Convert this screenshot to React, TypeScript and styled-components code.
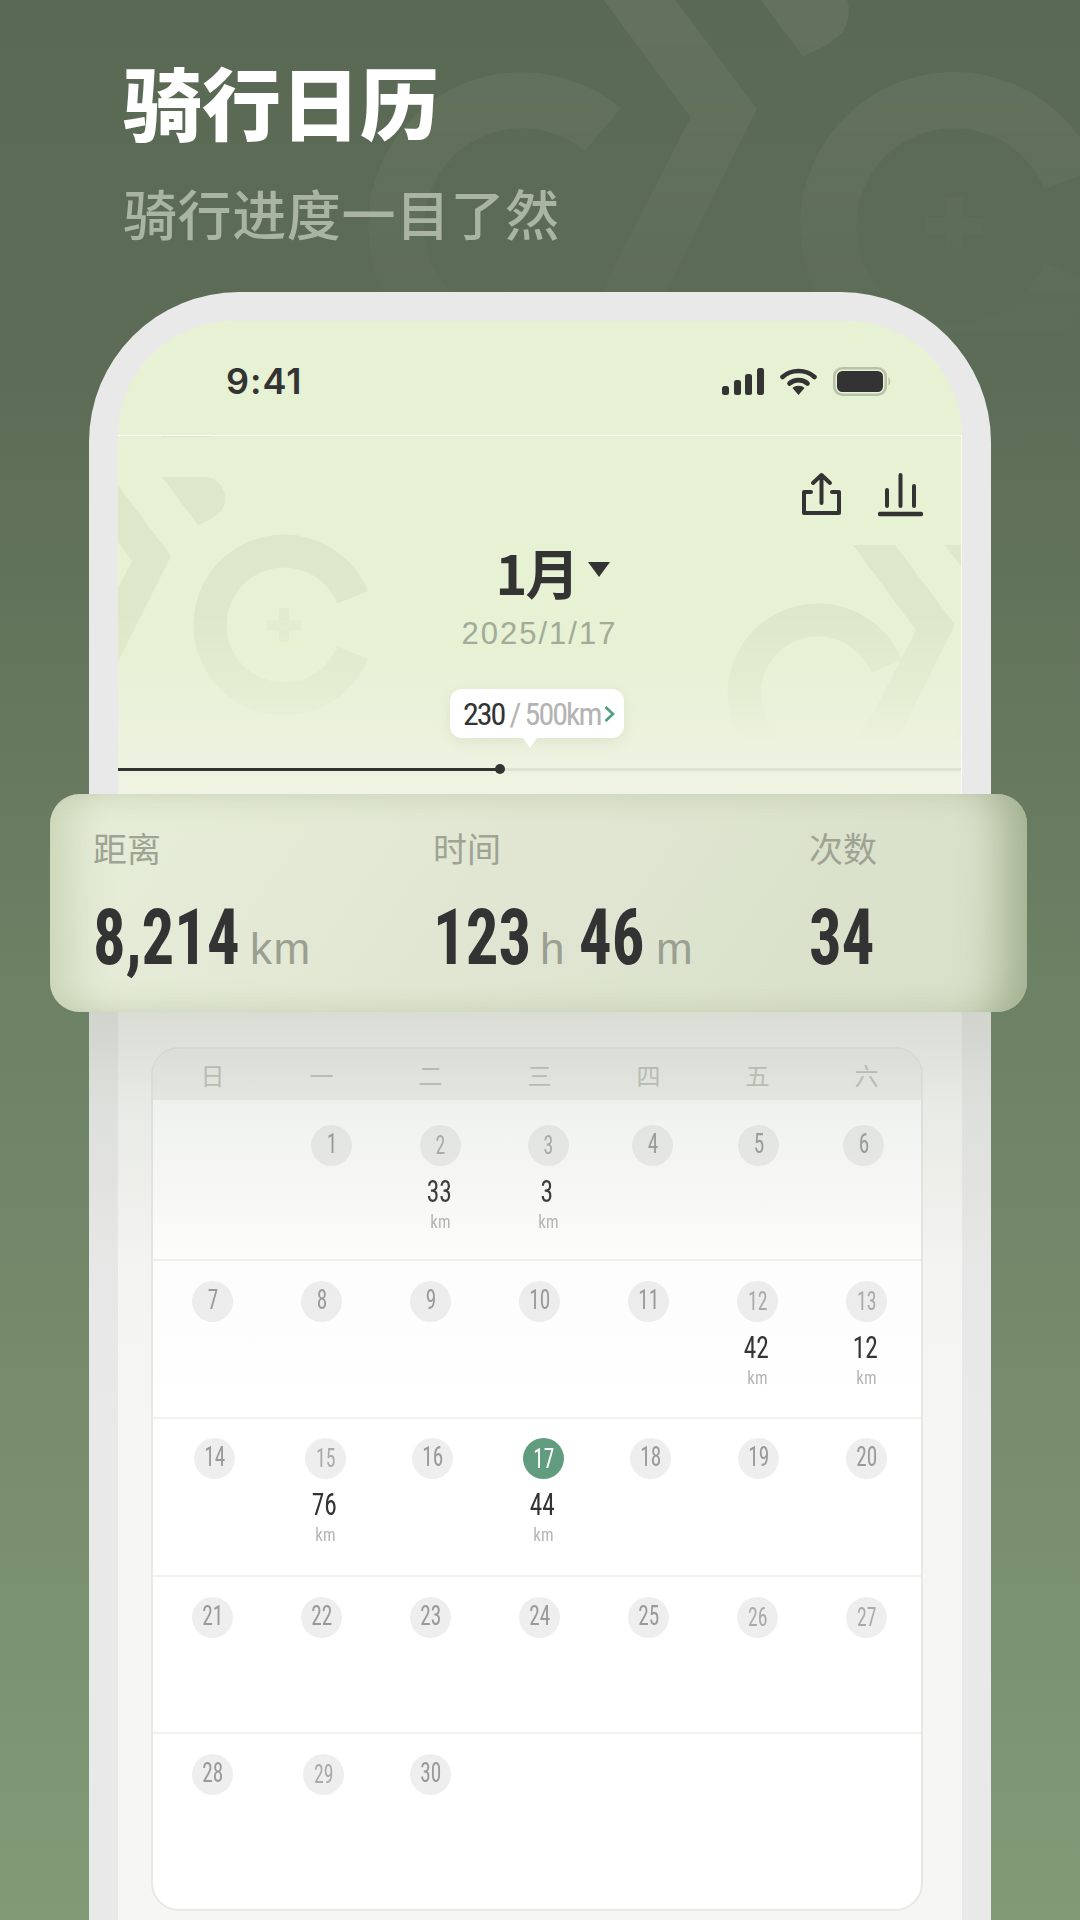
import React from 'react';
import styled, { createGlobalStyle } from 'styled-components';

const NARROW = '"Roboto Condensed", Roboto, sans-serif';
const CJK = '"Noto Sans CJK SC", "Noto Sans", sans-serif';

const GlobalStyle = createGlobalStyle`
  html, body {
    margin: 0;
    padding: 0;
    background: #6c8064;
  }
`;

const Page = styled.div`
  position: relative;
  width: 1080px;
  height: 1920px;
  overflow: hidden;
  background: linear-gradient(180deg, #5a6954 0%, #5d6c56 20%, #6c8064 50%, #829a76 100%);
  font-family: ${CJK};
`;

const Watermark = styled.svg`
  position: absolute;
  left: 0;
  top: 0;
  width: 1080px;
  height: 500px;
  mask-image: linear-gradient(180deg, #000 0%, rgba(0, 0, 0, 0.55) 40%, transparent 72%);
`;

const Intro = styled.div`
  position: relative;
  height: 292px;
  padding: 48px 0 0 123px;
  box-sizing: border-box;
`;

const Title = styled.h1`
  margin: 0;
  font-size: 79px;
  line-height: 106px;
  font-weight: 900;
  color: #ffffff;
`;

const Subtitle = styled.h2`
  margin: 21px 0 0;
  font-size: 54px;
  line-height: 76px;
  font-weight: 500;
  letter-spacing: 0.6px;
  color: #a9b4a3;
`;

const Phone = styled.div`
  position: relative;
  width: 902px;
  height: 1700px;
  margin-left: 89px;
  padding: 29px 29px 0;
  box-sizing: border-box;
  background: #e9e9e9;
  border-radius: 150px 150px 0 0;
`;

const Screen = styled.div`
  height: 100%;
  background: #f6f6f4;
  border-radius: 118px 118px 0 0;
`;

const StatusBar = styled.div`
  display: flex;
  align-items: center;
  justify-content: space-between;
  height: 114px;
  padding: 6px 70px 0 108px;
  box-sizing: border-box;
  background: #e7f1d4;
  border-radius: 118px 118px 0 0;
`;

const Clock = styled.span`
  font-family: Inter, sans-serif;
  font-size: 36px;
  font-weight: 600;
  letter-spacing: 1px;
  color: #333333;
`;

const StatusIcons = styled.div`
  display: flex;
  align-items: center;
  gap: 16px;
`;

const Header = styled.div`
  position: relative;
  height: 359px;
  background: linear-gradient(180deg, #e7f1d4 0%, #e7f1d4 58%, #eff3e3 100%);
  border-top: 1px solid rgba(255, 255, 255, 0.8);
  border-right: 1px solid rgba(255, 255, 255, 0.6);
  box-sizing: border-box;
  &::before {
    content: '';
    position: absolute;
    left: 44px;
    top: 0;
    width: 50px;
    height: 1px;
    background: #dde5cc;
  }
`;

const HeaderArt = styled.svg`
  position: absolute;
  left: 0;
  top: 0;
  width: 843px;
  height: 358px;
  mask-image: linear-gradient(180deg, #000 50%, transparent 85%);
`;

const Tools = styled.div`
  position: relative;
  display: flex;
  justify-content: flex-end;
  align-items: flex-start;
  gap: 37px;
  padding: 36px 38px 0 0;
  height: 81px;
`;

const MonthRow = styled.div`
  position: relative;
  display: flex;
  align-items: center;
  justify-content: center;
  gap: 11px;
  height: 70px;
  margin-top: -16px;
  padding-left: 27px;
  font-size: 54px;
  line-height: 70px;
  font-weight: 700;
  letter-spacing: -2px;
  color: #333333;
`;

const Caret = styled.i`
  width: 0;
  height: 0;
  margin-top: -6px;
  border-left: 11px solid transparent;
  border-right: 11px solid transparent;
  border-top: 15px solid #333333;
`;

const DateText = styled.div`
  position: relative;
  margin-top: 5px;
  text-align: center;
  font-family: "Liberation Sans", sans-serif;
  font-size: 31px;
  line-height: 44px;
  letter-spacing: 2px;
  color: #a3aa98;
`;

const Bubble = styled.div`
  position: absolute;
  left: 332px;
  top: 253px;
  display: flex;
  align-items: center;
  width: 174px;
  height: 49px;
  padding-left: 13px;
  box-sizing: border-box;
  background: #ffffff;
  border-radius: 12px;
  box-shadow: 0 4px 14px rgba(120, 130, 90, 0.12);
  font-family: ${NARROW};
  font-size: 32px;
  letter-spacing: -2px;
  white-space: nowrap;
  &::after {
    content: '';
    position: absolute;
    left: 73px;
    bottom: -10px;
    border-left: 7px solid transparent;
    border-right: 7px solid transparent;
    border-top: 10px solid #ffffff;
  }
`;

const BubbleDone = styled.span`
  color: #333333;
`;

const BubbleGoal = styled.span`
  margin-left: 5px;
  color: #b3b3b3;
`;

const BubbleArrow = styled.svg`
  margin-left: 3px;
`;

const Track = styled.div`
  position: absolute;
  left: 0;
  right: 0;
  top: 332px;
  height: 3px;
  background: #dde3cf;
`;

const TrackFill = styled.div`
  position: relative;
  height: 100%;
  background: #333333;
  &::after {
    content: '';
    position: absolute;
    right: -5px;
    top: -4px;
    width: 10px;
    height: 10px;
    border-radius: 50%;
    background: #333333;
  }
`;

const StatCard = styled.div`
  position: relative;
  z-index: 2;
  display: grid;
  grid-template-columns: 340px 376px 1fr;
  height: 218px;
  margin: 0 -65px 0 -68px;
  padding: 31px 0 0 43px;
  box-sizing: border-box;
  border-radius: 30px;
  background: linear-gradient(125deg, #e7eed8 0%, #e0e6d2 45%, #d7dfc7 100%);
  box-shadow: inset -42px 0 40px -18px rgba(150, 165, 130, 0.8),
    inset 42px 0 40px -22px rgba(170, 185, 145, 0.45);
`;

const StatLabel = styled.div`
  font-size: 34px;
  line-height: 46px;
  color: #9ea394;
`;

const StatValue = styled.div`
  display: flex;
  align-items: baseline;
  margin-top: 25px;
  font-family: ${NARROW};
  font-size: 78px;
  line-height: 84px;
  font-weight: 700;
  color: #333333;
`;

const StatNumber = styled.span<{ $width: number }>`
  display: inline-block;
  width: ${p => p.$width}px;
  white-space: nowrap;
  transform-origin: left center;
  transform: scaleX(0.83);
`;

const StatUnit = styled.span`
  margin: 0 13px 0 13px;
  font-family: "Liberation Sans", sans-serif;
  font-size: 44px;
  font-weight: 400;
  letter-spacing: 1.5px;
  color: #9a9f92;
`;

const Shade = styled.div`
  position: absolute;
  left: 0;
  right: 0;
  top: 720px;
  height: 420px;
  pointer-events: none;
  background: linear-gradient(
    180deg,
    rgba(160, 172, 150, 0.34) 0%,
    rgba(160, 172, 150, 0.16) 22%,
    rgba(160, 172, 150, 0.03) 60%,
    rgba(160, 172, 150, 0) 100%
  );
`;

const Calendar = styled.div`
  width: 772px;
  height: 864px;
  margin: 35px 0 0 33px;
  box-sizing: border-box;
  border: 2px solid #e8e8e4;
  border-radius: 28px;
  background: #ffffff;
  overflow: hidden;
`;

const WeekHead = styled.div`
  display: grid;
  grid-template-columns: repeat(7, 109px);
  height: 51px;
  padding-left: 5px;
  background: #f1f1ef;
`;

const WeekDay = styled.div`
  text-align: center;
  font-size: 24px;
  line-height: 51px;
  color: #bdc1b9;
`;

const WeekRow = styled.div<{ $height: number; $top: number }>`
  display: grid;
  grid-template-columns: repeat(7, 109px);
  height: ${p => p.$height}px;
  padding: ${p => p.$top}px 0 0 5px;
  box-sizing: border-box;
  border-bottom: 2px solid #f3f1ed;
  &:last-child {
    border-bottom: 0;
  }
`;

const DayCell = styled.div<{ $shift: number }>`
  display: flex;
  flex-direction: column;
  align-items: center;
  margin-left: ${p => p.$shift * 2}px;
  min-width: 0;
`;

const DayDot = styled.div<{ $active?: boolean; $soft?: boolean }>`
  width: 41px;
  height: 41px;
  border-radius: 50%;
  text-align: center;
  font-family: ${NARROW};
  font-size: ${p => (p.$soft ? 26 : 28)}px;
  line-height: ${p => (p.$soft || p.$active ? 41 : 37)}px;
  background: ${p => (p.$active ? '#629c7e' : '#eeeeee')};
  color: ${p => (p.$active ? '#ffffff' : p.$soft ? '#aaaaaa' : '#999999')};
`;

const DayNumber = styled.span`
  display: inline-block;
  transform: scaleX(0.76);
`;

const DayKm = styled.div`
  margin: 11px 3px 0 0;
  font-family: ${NARROW};
  font-size: 31px;
  line-height: 30px;
  color: #333333;
  transform: scaleX(0.82);
`;

const DayUnit = styled.div`
  margin-top: 5px;
  font-family: ${NARROW};
  font-size: 19px;
  line-height: 20px;
  color: #b5b5b5;
  transform: scaleX(0.88);
`;

type Day = { d: number; x?: number; km?: number; soft?: boolean };

const weeks: { height: number; top: number; days: (Day | null)[] }[] = [
  {
    height: 161,
    top: 25,
    days: [
      null,
      { d: 1, x: 10 },
      { d: 2, x: 10, km: 33, soft: true },
      { d: 3, x: 9, km: 3, soft: true },
      { d: 4, x: 4 },
      { d: 5, x: 1 },
      { d: 6, x: -3 },
    ],
  },
  {
    height: 158,
    top: 20,
    days: [
      { d: 7 },
      { d: 8 },
      { d: 9 },
      { d: 10 },
      { d: 11 },
      { d: 12, km: 42, soft: true },
      { d: 13, km: 12, soft: true },
    ],
  },
  {
    height: 158,
    top: 19,
    days: [
      { d: 14, x: 2 },
      { d: 15, x: 4, km: 76, soft: true },
      { d: 16, x: 2 },
      { d: 17, x: 4, km: 44 },
      { d: 18, x: 2 },
      { d: 19, x: 1 },
      { d: 20 },
    ],
  },
  {
    height: 157,
    top: 20,
    days: [
      { d: 21 },
      { d: 22 },
      { d: 23 },
      { d: 24 },
      { d: 25 },
      { d: 26, soft: true },
      { d: 27, soft: true },
    ],
  },
  {
    height: 176,
    top: 20,
    days: [{ d: 28 }, { d: 29, x: 2, soft: true }, { d: 30 }, null, null, null, null],
  },
];

const Chevron = ({ x, y, s = 1 }: { x: number; y: number; s?: number }) => (
  <polygon
    transform={`translate(${x} ${y}) scale(${s})`}
    points="-102,-80 -60,-80 0,0 -100,200 -139,200 -39,5"
  />
);

const Blade = ({ x, y, s = 1 }: { x: number; y: number; s?: number }) => (
  <path
    transform={`translate(${x} ${y}) scale(${s})`}
    d="M-9 -79 H34 C46 -79 54 -68 54 -58 C54 -46 48 -40 27 -31 Z"
  />
);

// the C of the logo, `open` is the half angle of its mouth
const Ring = ({ x, y, s = 1, open = 22, plus = 0 }: { x: number; y: number; s?: number; open?: number; plus?: number }) => {
  const ex = 74 * Math.cos((open * Math.PI) / 180);
  const ey = 74 * Math.sin((open * Math.PI) / 180);
  return (
    <g transform={`translate(${x} ${y}) scale(${s})`}>
      <path d={`M${ex} ${-ey} A74 74 0 1 0 ${ex} ${ey}`} fill="none" strokeWidth="33" />
      {plus > 0 && (
        <path d="M-5 -17 H5 V-5 H17 V5 H5 V17 H-5 V5 H-17 V-5 H-5 Z" stroke="none" opacity={plus} />
      )}
    </g>
  );
};

const ShareIcon = () => (
  <svg width="39" height="43" viewBox="0 0 39 43" fill="none" stroke="#333333" strokeWidth="4" strokeLinecap="round">
    <path d="M19.5 3 V31 M11 11 L19.5 3 L28 11" strokeLinejoin="round" />
    <path d="M9 20 H2 V41 H37 V20 H30" strokeLinejoin="round" />
  </svg>
);

const ChartIcon = () => (
  <svg width="45" height="45" viewBox="0 0 45 45" fill="none" stroke="#333333" strokeWidth="4" strokeLinecap="round">
    <path d="M9 18 V34 M22.5 3 V34 M36 14 V34" />
    <path d="M2 42 H43" strokeWidth="4.5" />
  </svg>
);

const SignalIcon = () => (
  <svg width="42" height="27" viewBox="0 0 42 27" fill="#333333">
    <rect x="0" y="18" width="7" height="9" rx="2.5" />
    <rect x="12" y="12" width="7" height="15" rx="2.5" />
    <rect x="23" y="6" width="7" height="21" rx="2.5" />
    <rect x="35" y="0" width="7" height="27" rx="2.5" />
  </svg>
);

const WifiIcon = () => (
  <svg width="37" height="27" viewBox="0 0 37 27">
    <path d="M2.5 9 C11 1 26 1 34.5 9" fill="none" stroke="#333333" strokeWidth="4.6" strokeLinecap="round" />
    <path d="M9.5 15.5 C14 11 23 11 27.5 15.5" fill="none" stroke="#333333" strokeWidth="4.6" strokeLinecap="round" />
    <path d="M18.5 27 L12.5 20 C15.5 17 21.5 17 24.5 20 Z" fill="#333333" />
  </svg>
);

const BatteryIcon = () => (
  <svg width="59" height="29" viewBox="0 0 59 29">
    <rect x="1.25" y="1.25" width="51.5" height="26.5" rx="8" fill="none" stroke="#b8c2a8" strokeWidth="2.5" />
    <rect x="4" y="4" width="46" height="21" rx="5.5" fill="#333333" />
    <path d="M55.5 10.5 C58 11.5 58 17.5 55.5 18.5 Z" fill="#b8c2a8" />
  </svg>
);

const App = () => (
  <Page>
    <GlobalStyle />
    <Watermark viewBox="0 0 1080 500" fill="rgba(255,255,255,0.06)" stroke="rgba(255,255,255,0.06)">
      <g stroke="none">
        <Chevron x={757} y={109} s={1.7} />
        <Blade x={757} y={109} s={1.7} />
      </g>
      <Ring x={522} y={226} s={1.7} open={50} />
      <Ring x={954} y={226} s={1.7} plus={0.6} />
    </Watermark>
    <Intro>
      <Title>骑行日历</Title>
      <Subtitle>骑行进度一目了然</Subtitle>
    </Intro>
    <Phone>
      <Screen>
        <StatusBar>
          <Clock>9:41</Clock>
          <StatusIcons>
            <SignalIcon />
            <WifiIcon />
            <BatteryIcon />
          </StatusIcons>
        </StatusBar>
        <Header>
          <HeaderArt viewBox="118 436 843 358" fill="#dde7c9" stroke="#dde7c9">
            <g stroke="none">
              <Chevron x={171} y={556} />
              <Blade x={171} y={556} />
              <Chevron x={955} y={625} />
              <Chevron x={1047} y={625} />
            </g>
            <Ring x={284} y={625} plus={0.6} />
            <Ring x={818} y={694} />
          </HeaderArt>
          <Tools>
            <ShareIcon />
            <ChartIcon />
          </Tools>
          <MonthRow>
            1月
            <Caret />
          </MonthRow>
          <DateText>2025/1/17</DateText>
          <Bubble>
            <BubbleDone>230</BubbleDone>
            <BubbleGoal>/ 500km</BubbleGoal>
            <BubbleArrow width="11" height="16" viewBox="0 0 11 16" fill="none" stroke="#4f9e80" strokeWidth="2.6">
              <path d="M1.5 1 L9 8 L1.5 15" />
            </BubbleArrow>
          </Bubble>
          <Track>
            <TrackFill style={{ width: `${(382 / 844) * 100}%` }} />
          </Track>
        </Header>
        <StatCard>
          <div>
            <StatLabel>距离</StatLabel>
            <StatValue>
              <StatNumber $width={144}>8,214</StatNumber>
              <StatUnit>km</StatUnit>
            </StatValue>
          </div>
          <div>
            <StatLabel>时间</StatLabel>
            <StatValue>
              <StatNumber $width={94}>123</StatNumber>
              <StatUnit>h</StatUnit>
              <StatNumber $width={64}>46</StatNumber>
              <StatUnit>m</StatUnit>
            </StatValue>
          </div>
          <div>
            <StatLabel>次数</StatLabel>
            <StatValue>
              <StatNumber $width={63}>34</StatNumber>
            </StatValue>
          </div>
        </StatCard>
        <Calendar>
          <WeekHead>
            {['日', '一', '二', '三', '四', '五', '六'].map(w => (
              <WeekDay key={w}>{w}</WeekDay>
            ))}
          </WeekHead>
          {weeks.map(week => (
            <WeekRow key={week.top + '-' + week.height} $height={week.height} $top={week.top}>
              {week.days.map((day, i) =>
                day ? (
                  <DayCell key={day.d} $shift={day.x || 0}>
                    <DayDot $active={day.d === 17} $soft={day.soft}>
                      <DayNumber>{day.d}</DayNumber>
                    </DayDot>
                    {day.km ? (
                      <>
                        <DayKm>{day.km}</DayKm>
                        <DayUnit>km</DayUnit>
                      </>
                    ) : null}
                  </DayCell>
                ) : (
                  <div key={i} />
                ),
              )}
            </WeekRow>
          ))}
        </Calendar>
      </Screen>
      <Shade />
    </Phone>
  </Page>
);

export default App;
